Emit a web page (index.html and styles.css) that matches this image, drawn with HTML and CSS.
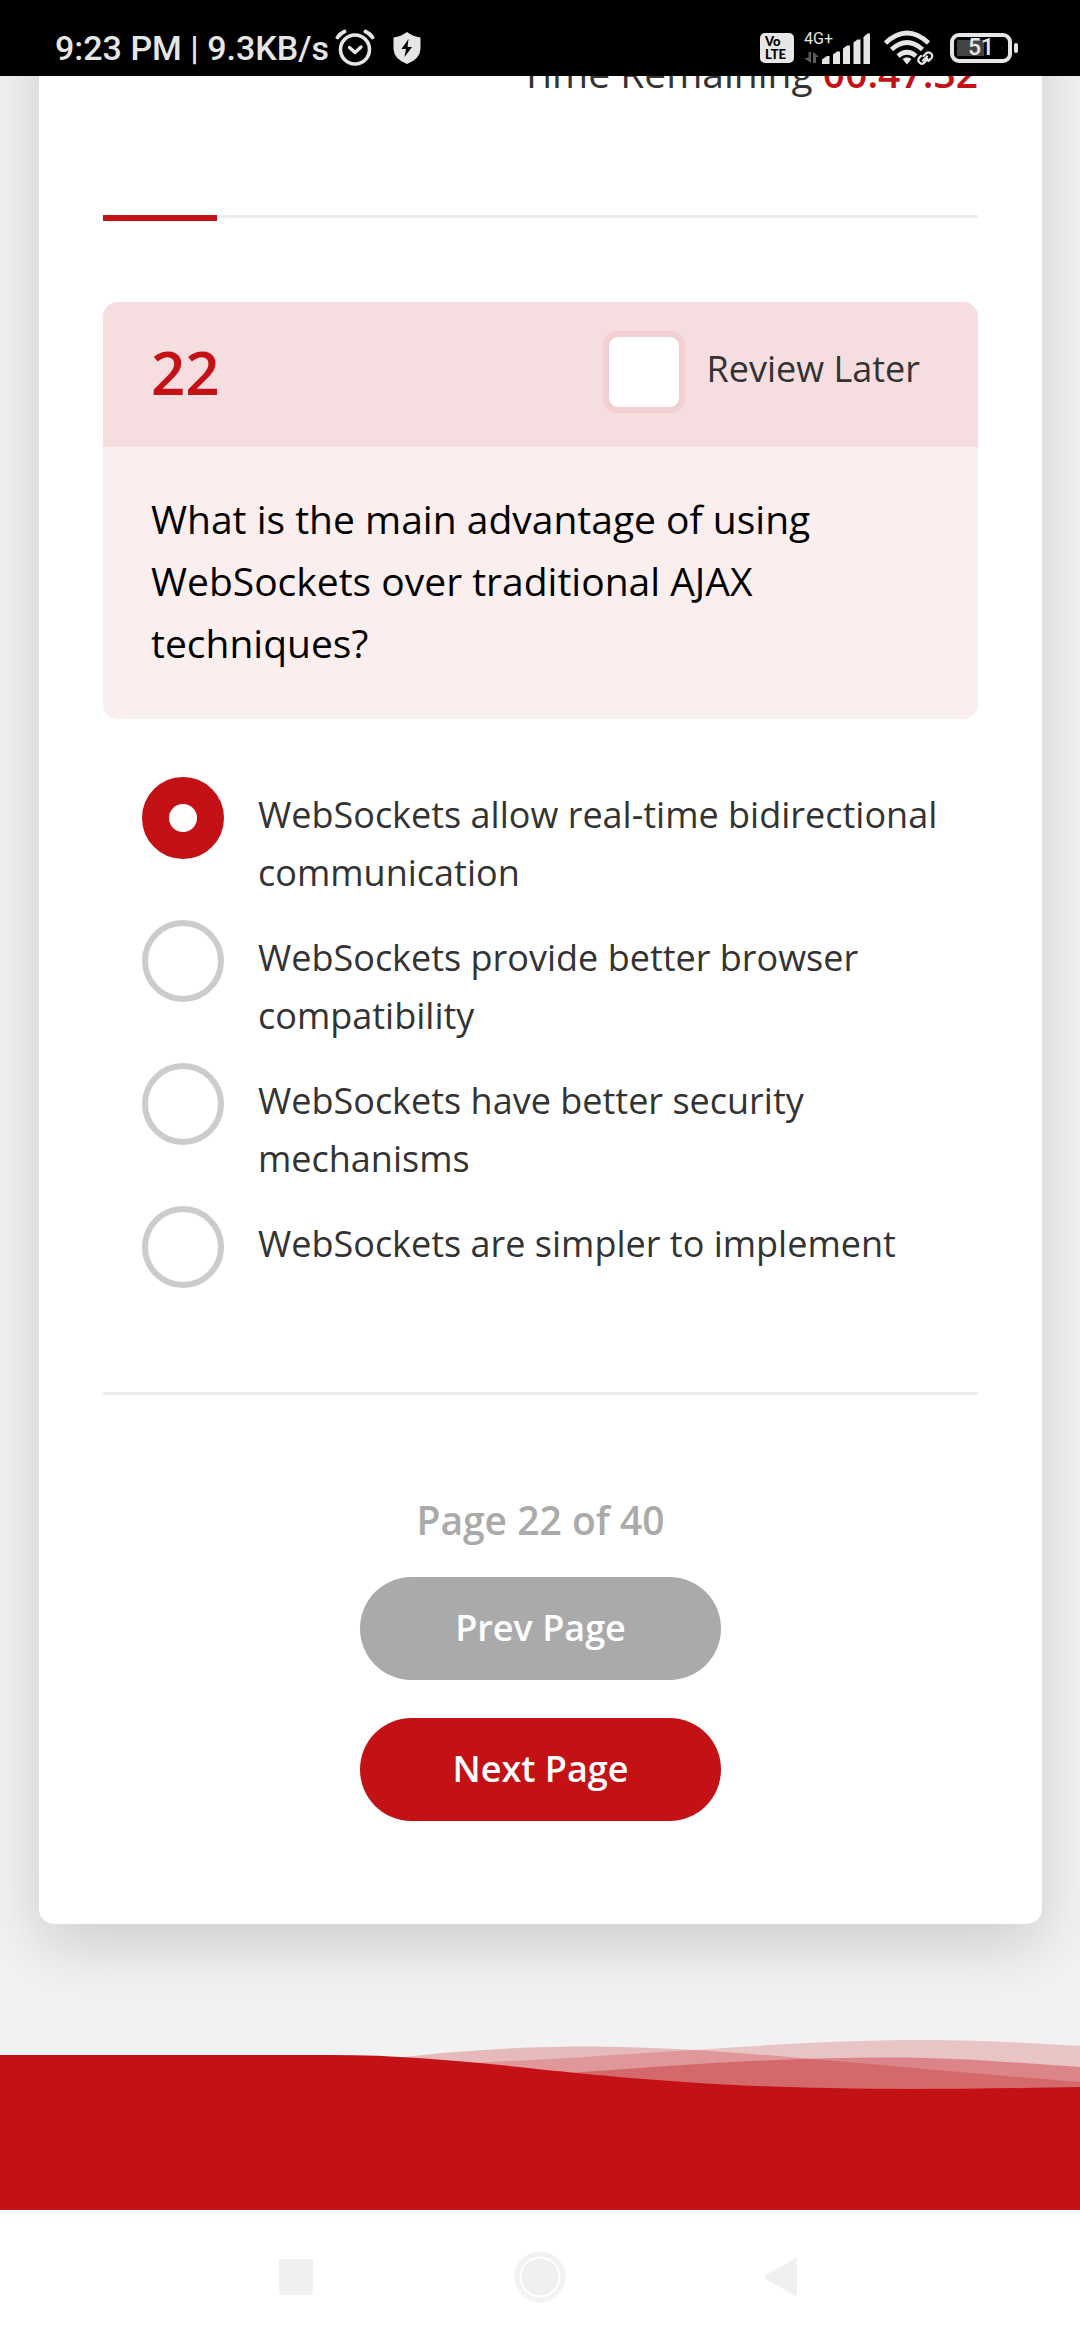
FILE: index.html
```html
<!DOCTYPE html>
<html lang="en">
<head>
<meta charset="utf-8">
<meta name="viewport" content="width=device-width, initial-scale=1">
<title>Quiz – Question 22</title>
<link rel="stylesheet" href="styles.css">
</head>
<body>
<header class="status">
  <div class="status-left">
    <span class="status-text">9:23 PM | 9.3KB/s</span>
    <svg class="alarm" width="40" height="38" viewBox="0 0 40 38" aria-hidden="true">
      <g fill="none" stroke="#e6e6e6" stroke-linecap="round" stroke-linejoin="round">
        <circle cx="20" cy="20.500" r="14.500" stroke-width="3.600"/>
        <path d="M14.500 18.500l5.500 5 6-5.500" stroke-width="3.400"/>
        <path d="M2.500 8.500Q5 4.500 9.500 2.500M30.500 2.500Q35 4.500 37.500 8.500" stroke-width="3.800"/>
      </g>
    </svg>
    <svg class="shield" width="28" height="32" viewBox="0 0 28 32" aria-hidden="true">
      <path d="M14 0Q20 4.500 27.500 5.500V17Q27 27 14 32Q1 27 .5 17V5.500Q8 4.500 14 0Z" fill="#e6e6e6"/>
      <path d="M15.500 7L8.500 17h4.500l-1.500 8 7.500-10h-4.500z" fill="#000"/>
    </svg>
  </div>
  <div class="status-right">
    <div class="volte"><span>Vo</span><span>LTE</span></div>
    <div class="signal">
      <span class="signal-type">4G+</span>
      <svg width="66" height="34" viewBox="804 30 66 34" aria-hidden="true">
        <path d="M808.500 51h2.500v11l-7-5h4.500zM813 62V51l6 5h-3v6z" fill="#5c5c5c"/>
        <path d="M822 63v-4.500l5-3.500h2.500v8zM833 63V53.500l4-3h3V63zM843 63V47.500l4-3h3V63zM853.500 63V41.500l4-3h3V63zM863.500 63V36l4-3.500h2.500V63z" fill="#e6e6e6"/>
      </svg>
    </div>
    <svg class="wifi" width="50" height="36" viewBox="0 0 50 36" aria-hidden="true">
      <g fill="none" stroke="#e6e6e6" stroke-width="4.600">
        <path d="M1.500 13Q23 -7 44.500 13"/>
        <path d="M7.500 19.500Q23 5.500 38.500 19.500"/>
        <path d="M14 26Q23 18.500 32 26"/>
      </g>
      <path d="M18.500 29Q23 25.500 27.500 29L23 34.500z" fill="#e6e6e6"/>
      <g fill="none" stroke="#000" stroke-width="8"><path d="M37 33L46 24"/></g>
      <g fill="none" stroke="#e6e6e6" stroke-width="2.200" stroke-linecap="round">
        <path d="M39.500 26l3-3a3.600 3.600 0 0 1 5 5l-3 3M43.500 29l-3.500 4a3.600 3.600 0 0 1-5-5l2-2M39 30.500l4-4"/>
      </g>
    </svg>
    <div class="battery"><span>51</span></div>
  </div>
</header>

<main class="card">
  <p class="timer">Time Remaining <strong>00:47:32</strong></p>
  <div class="progress"><div class="progress-bar"></div></div>

  <section class="question">
    <div class="question-head">
      <h1 class="number">22</h1>
      <label class="review"><input type="checkbox" class="check"><span>Review Later</span></label>
    </div>
    <p class="question-text">What is the main advantage of using WebSockets over traditional AJAX techniques?</p>
  </section>

  <form class="options">
    <label class="option"><input type="radio" name="answer" class="radio" checked><span>WebSockets allow real-time bidirectional communication</span></label>
    <label class="option"><input type="radio" name="answer" class="radio"><span>WebSockets provide better browser compatibility</span></label>
    <label class="option"><input type="radio" name="answer" class="radio"><span>WebSockets have better security mechanisms</span></label>
    <label class="option"><input type="radio" name="answer" class="radio"><span>WebSockets are simpler to implement</span></label>
  </form>

  <nav class="pager">
    <p class="page-label">Page 22 of 40</p>
    <button type="button" class="btn btn-muted">Prev Page</button>
    <button type="button" class="btn">Next Page</button>
  </nav>
</main>

<footer class="footer">
  <svg class="waves" viewBox="0 0 1080 70" preserveAspectRatio="none" aria-hidden="true">
    <path d="M400 27.500C470 19 540 16.500 590 16.500C720 17 850 34 1080 52V70H400Z" fill="#c41116" fill-opacity=".25"/>
    <path d="M470 33C650 25 790 10 920 10C980 10 1030 13 1080 16V70H470Z" fill="#c41116" fill-opacity=".2"/>
    <path d="M570 43C690 34 790 27.500 890 27.500C960 27.500 1020 33 1080 37V70H570Z" fill="#c41116" fill-opacity=".35"/>
    <path d="M0 25H330C500 25 600 59 910 59C970 59 1030 58 1080 57V70H0Z" fill="#c41116"/>
  </svg>
  <div class="footer-fill"></div>
</footer>

<nav class="system-nav">
  <button type="button" aria-label="Recent apps"><svg width="56" height="56" viewBox="0 0 56 56"><rect x="11" y="10" width="34" height="36" rx="3" fill="#f0f0f0"/></svg></button>
  <button type="button" aria-label="Home"><svg width="56" height="56" viewBox="0 0 56 56"><circle cx="28" cy="28" r="23" fill="none" stroke="#f2f2f2" stroke-width="5"/><circle cx="28" cy="28" r="18.500" fill="#f0f0f0"/></svg></button>
  <button type="button" aria-label="Back"><svg width="56" height="56" viewBox="0 0 56 56"><path d="M10 27L40 10V46L10 29Z" fill="#f0f0f0" stroke="#f0f0f0" stroke-width="2" stroke-linejoin="round"/></svg></button>
</nav>
</body>
</html>
```

FILE: styles.css
```css
* {
  box-sizing: border-box;
}

body {
  margin: 0;
  min-height: 100vh;
  display: flex;
  flex-direction: column;
  background: #f2f2f2;
  color: #333;
  font-family: "Open Sans", "Noto Sans", sans-serif;
  font-size: 36px;
  line-height: 58px;
}

p,
h1 {
  margin: 0;
}

/* System status bar, stays above the scrolled page */
.status {
  position: fixed;
  top: 0;
  left: 0;
  right: 0;
  z-index: 1;
  height: 76px;
  padding: 28px 62px 8px 55px;
  display: flex;
  justify-content: space-between;
  background: #000;
  color: #e6e6e6;
  font-family: Roboto, sans-serif;
}

.status-left,
.status-right {
  display: flex;
  align-items: center;
}

.status-text {
  font-size: 34px;
  line-height: 40px;
  font-weight: 500;
}

.alarm {
  margin-left: 6px;
}

.shield {
  margin-left: 18px;
}

.volte {
  width: 34px;
  height: 30px;
  padding: 2px 5px;
  border-radius: 5px;
  background: #e6e6e6;
  color: #000;
  display: flex;
  flex-direction: column;
  font-family: Lato, sans-serif;
  font-size: 13px;
  line-height: 13px;
  font-weight: 900;
}

.signal {
  position: relative;
  display: flex;
  margin-left: 10px;
}

.signal-type {
  position: absolute;
  top: 0;
  left: 0;
  font-size: 16px;
  line-height: 16px;
}

.wifi {
  margin-left: 14px;
}

.battery {
  position: relative;
  width: 62px;
  height: 30px;
  margin: 0 6px 0 16px;
  border: 4px solid #e6e6e6;
  border-radius: 9px;
  display: flex;
  align-items: center;
  justify-content: center;
  background: linear-gradient(#444, #444) 3px 3px / 27px 16px no-repeat;
  font-size: 23px;
  line-height: 22px;
  font-weight: 500;
}

.battery::after {
  content: "";
  position: absolute;
  top: 6px;
  right: -10px;
  width: 4px;
  height: 10px;
  border-radius: 2px;
  background: #e6e6e6;
}

.card {
  margin: 0 38px 0 39px;
  padding: 42px 64px 103px;
  border-radius: 15px;
  background: #fff;
  box-shadow: 0 20px 62px rgba(0, 0, 0, 0.16);
}

.timer {
  font-size: 39px;
  line-height: 62px;
  text-align: right;
}

.timer strong {
  color: #c41116;
  font-weight: 600;
}

.progress {
  height: 3px;
  margin-top: 111px;
  background: #eee;
}

.progress-bar {
  width: 13%;
  height: 6px;
  background: #c41116;
}

.question {
  margin-top: 84px;
  border-radius: 15px;
  overflow: hidden;
  background: #faeeee;
}

.question-head {
  display: flex;
  align-items: center;
  justify-content: space-between;
  padding: 22px 58px 27px 48px;
  background: #f6dee0;
}

.number {
  color: #c41116;
  font-size: 60px;
  line-height: 96px;
  font-weight: 600;
}

.review {
  display: flex;
  align-items: center;
  gap: 21px;
}

.review span {
  padding-bottom: 6px;
}

.check,
.radio {
  appearance: none;
  flex: none;
  width: 82px;
  height: 82px;
  margin: 0;
  background: #fff;
}

.check {
  border: 6px solid #f2d0d2;
  border-radius: 15px;
}

.check:checked {
  background: #c41116;
}

.question-text {
  padding: 41px 48px 45px;
  color: #000;
  font-size: 39px;
  line-height: 62px;
}

.options {
  display: flex;
  flex-direction: column;
  gap: 18px;
  padding: 58px 30px 104px 39px;
  border-bottom: 3px solid #eee;
}

.option {
  display: flex;
  align-items: flex-start;
  gap: 34px;
}

.option span {
  padding-top: 9px;
}

.radio {
  border: 6px solid #ccc;
  border-radius: 50%;
}

.radio:checked {
  border: 27px solid #c41116;
}

.pager {
  display: flex;
  flex-direction: column;
  align-items: center;
  padding-top: 94px;
}

.page-label {
  margin-bottom: 26px;
  color: #aaa;
  font-size: 39px;
  line-height: 62px;
  font-weight: 600;
}

.btn {
  width: 361px;
  height: 103px;
  padding: 0 0 2px;
  border: 0;
  border-radius: 52px;
  background: #c41116;
  color: #fff;
  font: 600 36px/58px "Open Sans", "Noto Sans", sans-serif;
}

.btn-muted {
  margin-bottom: 38px;
  background: #aaa;
}

.footer {
  flex: 1;
  display: flex;
  flex-direction: column;
  margin-top: 106px;
}

.waves {
  display: block;
  width: 100%;
  height: 70px;
}

.footer-fill {
  flex: 1;
  min-height: 100px;
  background: #c41116;
}

.system-nav {
  display: flex;
  justify-content: center;
  height: 130px;
  background: #fff;
}

.system-nav button {
  width: 244px;
  padding: 4px 0 0;
  border: 0;
  background: none;
}

.system-nav svg {
  display: block;
  margin: 0 auto;
}
```
